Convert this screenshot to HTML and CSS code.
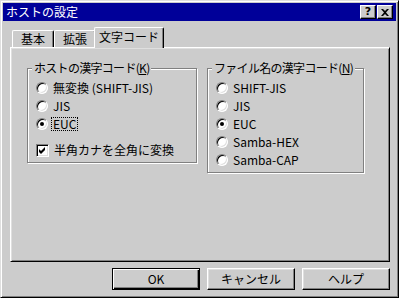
FILE: index.html
```html
<!DOCTYPE html>
<html lang="ja">

<head>
    <meta charset="UTF-8">
    <title>ホストの設定</title>
    <link rel="stylesheet" href="styles.css">
</head>

<body>
    <div class="window">
        <div class="titlebar">
            <span class="title">ホストの設定</span>
            <div class="title-buttons">
                <span class="tbtn help">?</span>
                <span class="tbtn">
                    <svg width="8" height="7" viewBox="0 0 8 7">
                        <path d="M0 0h2l2 2 2-2h2l-3 3.5 3 3.5h-2l-2-2-2 2h-2l3-3.5z" fill="#000" />
                    </svg>
                </span>
            </div>
        </div>

        <div class="content">
            <!-- Tabs -->
            <div class="tabs">
                <div class="tab">基本</div>
                <div class="tab">拡張</div>
                <div class="tab active">文字コード</div>
            </div>

            <div class="panel">
                <div class="group host">
                    <span class="legend">ホストの漢字コード(<u>K</u>)</span>
                    <div class="options">
                        <div class="opt"><span class="radio"></span>無変換 (SHIFT-JIS)</div>
                        <div class="opt"><span class="radio"></span>JIS</div>
                        <div class="opt"><span class="radio checked"></span><span class="focus">EUC</span></div>
                    </div>
                    <div class="opt check-row">
                        <span class="checkbox">
                            <svg width="7" height="7" viewBox="0 0 7 7">
                                <path d="M0 2l2 2 4-4v3l-4 4-2-2z" fill="#000" />
                            </svg>
                        </span>半角カナを全角に変換
                    </div>
                </div>

                <div class="group file">
                    <span class="legend">ファイル名の漢字コード(<u>N</u>)</span>
                    <div class="options">
                        <div class="opt"><span class="radio"></span>SHIFT-JIS</div>
                        <div class="opt"><span class="radio"></span>JIS</div>
                        <div class="opt"><span class="radio checked"></span>EUC</div>
                        <div class="opt"><span class="radio"></span>Samba-HEX</div>
                        <div class="opt"><span class="radio"></span>Samba-CAP</div>
                    </div>
                </div>
            </div>

            <div class="actions">
                <button class="btn default">OK</button>
                <button class="btn">キャンセル</button>
                <button class="btn">ヘルプ</button>
            </div>
        </div>
    </div>
</body>

</html>
```

FILE: styles.css
```css
* {
    box-sizing: border-box;
}

body {
    margin: 0;
    background-color: #cccccc;
    font-family: "Noto Sans CJK JP", "DejaVu Sans", sans-serif;
    font-size: 12px;
    line-height: 12px;
    color: #000;
}

.window {
    width: 399px;
    height: 298px;
    padding: 2px;
    background-color: #cccccc;
    border: 1px solid;
    border-color: #dfdfdf #000 #000 #dfdfdf;
    box-shadow: inset 1px 1px #fff, inset -1px -1px #808080;
}

.titlebar {
    height: 18px;
    padding: 0 3px 0 3px;
    display: flex;
    align-items: center;
    justify-content: space-between;
    background-color: #000099;
    color: #fff;
}

.title-buttons {
    display: flex;
    gap: 1px;
}

.tbtn {
    width: 16px;
    height: 14px;
    display: flex;
    align-items: center;
    justify-content: center;
    background-color: #cccccc;
    border: 1px solid;
    border-color: #fff #000 #000 #fff;
    box-shadow: inset -1px -1px #808080;
    color: #000;
}

.tbtn.help {
    font-family: "DejaVu Sans", sans-serif;
    font-weight: bold;
    font-size: 11px;
}

.content {
    padding: 6px 6px 0 7px;
}

/* Tabs */
.tabs {
    display: flex;
    align-items: flex-end;
    height: 21px;
    padding-left: 2px;
    margin-bottom: -1px;
    position: relative;
    z-index: 1;
}

.tab {
    width: 42px;
    height: 17px;
    margin-bottom: 1px;
    display: flex;
    align-items: center;
    justify-content: center;
    background-color: #cccccc;
    border-top: 1px solid #fff;
    border-left: 1px solid #fff;
    border-right: 1px solid #000;
    border-radius: 2px 2px 0 0;
    box-shadow: inset -1px 0 #808080;
}

.tab.active {
    width: 70px;
    height: 21px;
    margin-left: -2px;
    margin-bottom: 0;
    padding-bottom: 3px;
}

.panel {
    width: 380px;
    height: 215px;
    padding: 20px 0 0 16px;
    display: flex;
    align-items: flex-start;
    gap: 10px;
    border: 1px solid;
    border-color: #fff #000 #000 #fff;
    box-shadow: inset 1px 1px #dfdfdf, inset -1px -1px #808080;
}

/* Group boxes */
.group {
    display: flex;
    flex-direction: column;
    padding: 0 8px 3px;
    border: 1px solid #808080;
    box-shadow: inset 1px 1px #fff, 1px 1px #fff;
}

.group.host {
    width: 170px;
}

.group.file {
    width: 157px;
}

.legend {
    align-self: flex-start;
    margin: -7px -12px 0 -4px;
    padding: 0 2px;
    white-space: nowrap;
    letter-spacing: -0.7px;
    background-color: #cccccc;
}

.options {
    margin-top: 5px;
}

.opt {
    height: 18px;
    display: flex;
    align-items: center;
    gap: 5px;
    white-space: nowrap;
}

.check-row {
    margin-top: 8px;
}

.radio {
    width: 12px;
    height: 12px;
    flex: none;
    display: flex;
    align-items: center;
    justify-content: center;
    border-radius: 50%;
    background-color: #fff;
    border: 1px solid;
    border-color: #808080 #fff #fff #808080;
    box-shadow: inset 1px 1px #000, inset -1px -1px #dfdfdf;
}

.radio.checked::after {
    content: "";
    width: 4px;
    height: 4px;
    border-radius: 50%;
    background-color: #000;
}

.checkbox {
    width: 13px;
    height: 13px;
    flex: none;
    display: flex;
    align-items: center;
    justify-content: center;
    background-color: #fff;
    border: 1px solid;
    border-color: #808080 #fff #fff #808080;
    box-shadow: inset 1px 1px #000, inset -1px -1px #dfdfdf;
}

.focus {
    outline: 1px dotted #000;
    padding: 0 1px;
    margin-left: -1px;
}

/* Buttons */
.actions {
    display: flex;
    justify-content: flex-end;
    gap: 7px;
    margin-top: 6px;
}

.btn {
    width: 88px;
    height: 22px;
    padding: 0;
    font: inherit;
    color: #000;
    background-color: #cccccc;
    border: 1px solid;
    border-color: #fff #000 #000 #fff;
    box-shadow: inset -1px -1px #808080, inset 1px 1px #dfdfdf;
}

.btn.default {
    border-color: #000;
    box-shadow: inset 1px 1px #fff, inset -1px -1px #000, inset -2px -2px #808080;
}
```
